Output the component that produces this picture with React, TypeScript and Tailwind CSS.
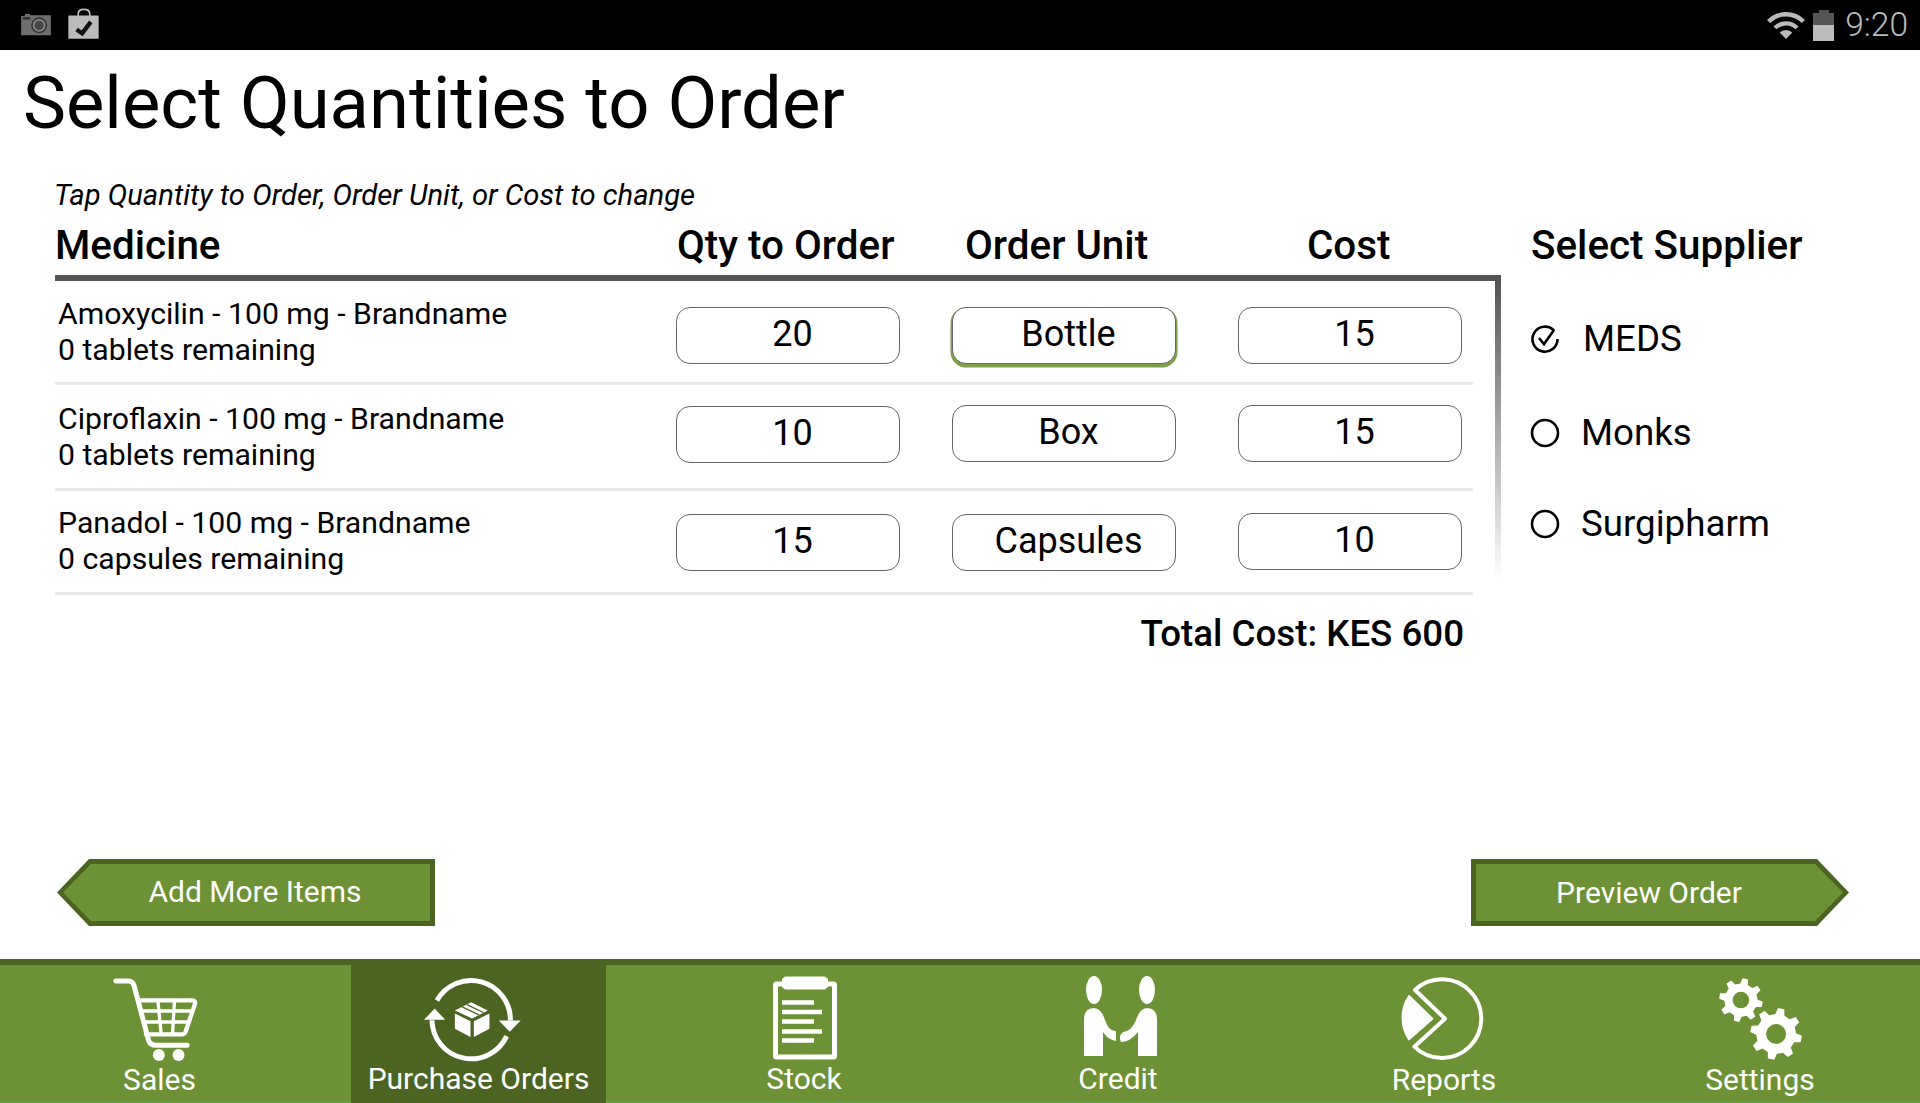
const ROWS = [
  {
    name: 'Amoxycilin - 100 mg - Brandname',
    stock: '0 tablets remaining',
    qty: '20',
    unit: 'Bottle',
    cost: '15',
    rowClass: 'h-[104px]',
    textClass: 'pt-[15px]',
    qtyClass: 'mt-[26px]',
    unitClass: 'mt-[26px] shadow-[0_2px_0_1.5px_#7f9f4a]',
    costClass: 'mt-[26px]',
  },
  {
    name: 'Ciproflaxin - 100 mg - Brandname',
    stock: '0 tablets remaining',
    qty: '10',
    unit: 'Box',
    cost: '15',
    rowClass: 'h-[106px]',
    textClass: 'pt-[16px]',
    qtyClass: 'mt-[21px]',
    unitClass: 'mt-[20px]',
    costClass: 'mt-[20px]',
  },
  {
    name: 'Panadol - 100 mg - Brandname',
    stock: '0 capsules remaining',
    qty: '15',
    unit: 'Capsules',
    cost: '10',
    rowClass: 'h-[104px]',
    textClass: 'pt-[14px]',
    qtyClass: 'mt-[23px]',
    unitClass: 'mt-[23px]',
    costClass: 'mt-[22px]',
  },
];

const NAV = [
  { label: 'Sales', tabClass: 'w-[351px] pr-[32px]', labelClass: 'pt-[1px]', icon: <CartIcon /> },
  { label: 'Purchase Orders', tabClass: 'w-[255px] bg-[#4c6422]', labelClass: '', icon: <PurchaseIcon /> },
  { label: 'Stock', tabClass: 'w-[396px]', labelClass: '', icon: <StockIcon /> },
  { label: 'Credit', tabClass: 'w-[232px]', labelClass: '', icon: <CreditIcon /> },
  { label: 'Reports', tabClass: 'w-[420px]', labelClass: 'pt-[1px]', icon: <ReportsIcon /> },
  { label: 'Settings', tabClass: 'flex-1 pr-[54px]', labelClass: 'pt-[1px]', icon: <SettingsIcon /> },
];

function gearPath(cx: number, cy: number, outer: number, body: number, hole: number, teeth: number) {
  const step = (Math.PI * 2) / teeth;
  let d = '';
  for (let i = 0; i < teeth; i++) {
    const a = i * step + step / 4;
    const pts = [
      [body, a - step * 0.3],
      [outer, a - step * 0.16],
      [outer, a + step * 0.16],
      [body, a + step * 0.3],
    ];
    pts.forEach(([r, t], j) => {
      const x = (cx + r * Math.cos(t)).toFixed(1);
      const y = (cy + r * Math.sin(t)).toFixed(1);
      d += `${i === 0 && j === 0 ? 'M' : 'L'}${x} ${y} `;
    });
  }
  d += `Z M${cx + hole} ${cy} A${hole} ${hole} 0 1 0 ${cx - hole} ${cy} A${hole} ${hole} 0 1 0 ${cx + hole} ${cy} Z`;
  return d;
}

function CartIcon() {
  return (
    <svg width="87" height="85" viewBox="35 30 260 255" fill="none" stroke="white" strokeLinecap="round" strokeLinejoin="round" className="mr-[8px] shrink-0">
      <path d="M46 45 H84 Q97 45 101 60 L144 222 Q148 238 168 238 H260" strokeWidth="15" />
      <path d="M113 103 H275 Q287 103 283 115 L255 198 Q252 205 244 205 L136 205" strokeWidth="13" />
      <path d="M122 135 H274 M132 168 H264 M172 103 L182 205 M222 103 L216 205" strokeWidth="10" strokeLinecap="butt" />
      <circle cx="175" cy="267" r="18" fill="white" stroke="none" />
      <circle cx="234" cy="267" r="18" fill="white" stroke="none" />
    </svg>
  );
}

function PurchaseIcon() {
  return (
    <svg width="98" height="87" viewBox="970 25 295 260" fill="none" className="mr-[14px] shrink-0">
      <path d="M1012 98 A118 118 0 0 1 1233 158" stroke="white" strokeWidth="15" />
      <path d="M1222 205 A118 118 0 0 1 997 157" stroke="white" strokeWidth="15" />
      <path d="M1198 158 L1264 158 L1231 192 Z M973 156 L1037 156 L1005 122 Z" fill="white" />
      <path d="M1066 128 L1115 103 L1165 128 L1118 152 Z" fill="white" />
      <path d="M1088 117 L1138 141 M1102 110 L1152 134" stroke="#4c6422" strokeWidth="4" />
      <path d="M1066 137 L1113 160 V208 L1066 183 Z M1123 160 L1170 137 V183 L1123 208 Z" fill="white" />
    </svg>
  );
}

function StockIcon() {
  return (
    <svg width="64" height="84" viewBox="0 0 64 84" fill="none" className="ml-[2px] shrink-0">
      <rect x="2.5" y="8" width="59" height="73" rx="1" stroke="white" strokeWidth="5" />
      <path d="M12 0.5 H52 L55 3 V11 L52 13.5 H12 L9 11 V3 Z" fill="white" />
      <path d="M9 26.5 H41 M9 36 H49 M9 45.5 H41 M9 55.5 H49 M9 64.5 H41" stroke="white" strokeWidth="4.5" />
    </svg>
  );
}

function CreditIcon() {
  return (
    <svg width="73" height="84" viewBox="0 0 73 84" fill="white" className="ml-[4px] shrink-0">
      <ellipse cx="10" cy="14" rx="8" ry="14" />
      <ellipse cx="63" cy="14" rx="8" ry="14" />
      <path d="M0 80 V44 Q0 32 10 32 Q17 32 21 44 Q25 56 32 55 L32 65 Q24 64 19 56 V80 Z" />
      <path d="M73 80 V44 Q73 32 63 32 Q56 32 52 44 Q47 56 39 56 Q34 60 37 66 Q46 66 54 56 V80 Z" />
    </svg>
  );
}

function ReportsIcon() {
  return (
    <svg width="85" height="85" viewBox="30 20 255 255" fill="none" className="mr-[5px] shrink-0">
      <path d="M78 62 L168 148 L76 232 A118 118 0 1 0 78 62 Z" stroke="white" strokeWidth="12" strokeLinejoin="round" />
      <path d="M60 80 L130 148 L60 210 A118 118 0 0 1 60 80 Z" fill="white" stroke="white" strokeWidth="6" strokeLinejoin="round" />
    </svg>
  );
}

function SettingsIcon() {
  return (
    <svg width="83" height="85" viewBox="990 20 250 255" fill="white" fillRule="evenodd" className="shrink-0">
      <path d={gearPath(1056, 92, 66, 50, 25, 8)} />
      <path d={gearPath(1162, 194, 78, 60, 30, 8)} />
    </svg>
  );
}

function CameraIcon() {
  return (
    <svg width="32" height="24" viewBox="30 40 95 72" className="shrink-0">
      <path d="M33 49 H44 V43 H60 V47 H122 V107 H33 Z" fill="#6f6f6f" />
      <rect x="38" y="52" width="22" height="8" fill="#333" />
      <circle cx="87" cy="77" r="24" fill="#333" />
      <circle cx="87" cy="77" r="19" fill="#8a8a8a" />
      <circle cx="87" cy="77" r="14" fill="#444" />
    </svg>
  );
}

function BagIcon() {
  return (
    <svg width="33" height="31" viewBox="172 20 98 94" className="mb-[3px] shrink-0">
      <path d="M205 44 V38 Q205 24 222 24 Q240 24 240 38 V44" fill="none" stroke="#bbb" strokeWidth="5" />
      <rect x="175" y="43" width="92" height="70" rx="2" fill="#bbb" />
      <path d="M200 85 L217 97 L243 62" fill="none" stroke="#111" strokeWidth="13" />
    </svg>
  );
}

function WifiIcon() {
  return (
    <svg width="38" height="30" viewBox="45 26 120 90" fill="none" className="mb-[1px] shrink-0">
      <path d="M50 60 A78 78 0 0 1 160 60" stroke="#bbb" strokeWidth="14" />
      <path d="M70 80 A50 50 0 0 1 140 80" stroke="#bbb" strokeWidth="13" />
      <path d="M85 95 A28 28 0 0 1 125 95 L105 115 Z" fill="#bbb" />
    </svg>
  );
}

function BatteryIcon() {
  return (
    <div className="flex w-[21px] shrink-0 flex-col items-center">
      <div className="h-[3px] w-[10px] bg-[#555]" />
      <div className="h-[12px] w-full bg-[#555]" />
      <div className="h-[16px] w-full bg-[#bbb]" />
    </div>
  );
}

function RadioIcon({ checked }: { checked: boolean }) {
  return (
    <svg width="30" height="30" viewBox="0 0 30 30" fill="none" className="shrink-0">
      {checked ? (
        <>
          <path d="M24 6.5 A12.5 12.5 0 1 0 27.5 15" stroke="black" strokeWidth="2.6" />
          <path d="M9 14 L14 20 L24 6" stroke="black" strokeWidth="2.6" />
        </>
      ) : (
        <circle cx="15" cy="15" r="13" stroke="black" strokeWidth="2.6" />
      )}
    </svg>
  );
}

function ValueBox({ value, className }: { value: string; className: string }) {
  return (
    <div className={`flex h-[57px] shrink-0 items-center justify-center rounded-[14px] border-[1.5px] border-[#666] bg-white pb-[3px] pl-[9px] text-[36px] ${className}`}>
      {value}
    </div>
  );
}

function ArrowButton({ label, direction }: { label: string; direction: 'left' | 'right' }) {
  const isLeft = direction === 'left';
  return (
    <button
      type="button"
      className={`h-[67px] w-[378px] bg-[#4c6422] p-[5px] ${
        isLeft
          ? '[clip-path:polygon(32px_0,100%_0,100%_100%,32px_100%,0_50%)]'
          : '[clip-path:polygon(0_0,346px_0,100%_50%,346px_100%,0_100%)]'
      }`}
    >
      <div
        className={`flex h-full items-center justify-center bg-[#6d9135] text-[30px] text-white ${
          isLeft
            ? 'pl-[18px] pb-[2px] [clip-path:polygon(29px_0,100%_0,100%_100%,29px_100%,1px_50%)]'
            : 'pr-[22px] [clip-path:polygon(0_0,339px_0,calc(100%-1px)_50%,339px_100%,0_100%)]'
        }`}
      >
        {label}
      </div>
    </button>
  );
}

export default function App() {
  return (
    <div className="flex h-[1103px] w-[1920px] flex-col overflow-hidden bg-white font-[Roboto,sans-serif] text-black">
      <div className="flex h-[50px] shrink-0 items-center justify-between bg-black pl-[20px] pr-[12px]">
        <div className="flex items-center gap-[15px]">
          <CameraIcon />
          <BagIcon />
        </div>
        <div className="flex items-center">
          <WifiIcon />
          <div className="ml-[8px]">
            <BatteryIcon />
          </div>
          <span className="ml-[11px] text-[33.5px] leading-[36px] font-light text-[#bbb]">9:20</span>
        </div>
      </div>

      <h1 className="mt-[14px] pl-[23px] text-[72.4px] leading-[80px] font-normal">Select Quantities to Order</h1>

      <div className="mt-[33px] flex pl-[55px]">
        <div className="w-[1446px]">
          <p className="-ml-[1px] text-[29.2px] leading-[36px] italic">Tap Quantity to Order, Order Unit, or Cost to change</p>
          <div className="mt-[10px] flex h-[52px] text-[40.4px] leading-[46px] font-medium">
            <div className="w-[622px]">Medicine</div>
            <div className="w-[288px]">Qty to Order</div>
            <div className="w-[342px]">Order Unit</div>
            <div>Cost</div>
          </div>
          <div className="flex items-start justify-between border-t-[6px] border-[#555]">
            <div className="w-[1418px]">
              {ROWS.map((row) => (
                <div key={row.name} className={`flex items-start border-b-[3px] border-[#e9e9e9] ${row.rowClass}`}>
                  <div className={`w-[621px] shrink-0 pl-[3px] text-[30.2px] leading-[36px] ${row.textClass}`}>
                    <div>{row.name}</div>
                    <div>{row.stock}</div>
                  </div>
                  <ValueBox value={row.qty} className={`w-[224px] ${row.qtyClass}`} />
                  <ValueBox value={row.unit} className={`ml-[52px] w-[224px] ${row.unitClass}`} />
                  <ValueBox value={row.cost} className={`ml-[62px] w-[224px] ${row.costClass}`} />
                </div>
              ))}
              <div className="mt-[18px] w-[1409px] text-right text-[36.7px] leading-[42px] font-medium">Total Cost: KES 600</div>
            </div>
            <div className="h-[299px] w-[6px] bg-linear-to-b from-[#555] to-transparent" />
          </div>
        </div>

        <div className="ml-[29px] pt-[46px]">
          <div className="ml-[1px] h-[58px] text-[40.4px] leading-[46px] font-medium">Select Supplier</div>
          <div className="mt-[37px] flex items-center gap-[23px] text-[36.7px] leading-[42px]">
            <RadioIcon checked />
            MEDS
          </div>
          <div className="mt-[52px] flex items-center gap-[21px] text-[36.7px] leading-[42px]">
            <RadioIcon checked={false} />
            Monks
          </div>
          <div className="mt-[49px] flex items-center gap-[21px] text-[36.7px] leading-[42px]">
            <RadioIcon checked={false} />
            Surgipharm
          </div>
        </div>
      </div>

      <div className="mt-auto flex justify-between pb-[33px] pl-[57px] pr-[71px]">
        <ArrowButton label="Add More Items" direction="left" />
        <ArrowButton label="Preview Order" direction="right" />
      </div>

      <nav className="flex h-[144px] shrink-0 border-t-[6px] border-[#4c6422] bg-[#6d9135] shadow-[inset_0_-2px_0_#66a046]">
        {NAV.map((item) => (
          <div key={item.label} className={`flex flex-col items-center pt-[11px] text-white ${item.tabClass}`}>
            <div className="flex h-[85px] items-start justify-center">{item.icon}</div>
            <div className={`text-[30px] leading-[36px] ${item.labelClass}`}>{item.label}</div>
          </div>
        ))}
      </nav>
    </div>
  );
}
